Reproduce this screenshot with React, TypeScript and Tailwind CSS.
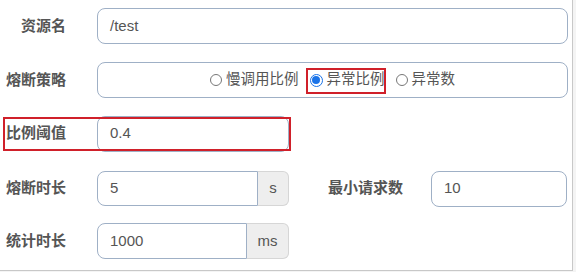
import React from "react";

const font = { fontFamily: '"Liberation Sans","Noto Sans CJK SC",Arial,sans-serif' };

function Label({ children }: { children: React.ReactNode }) {
  return (
    <div className="w-[66px] shrink-0 text-right text-[15px] font-bold text-[#555]">{children}</div>
  );
}

function Radio({ checked, label }: { checked?: boolean; label: string }) {
  return (
    <span className="flex items-center gap-[4px]">
      {checked ? (
        <span className="flex h-[13px] w-[13px] items-center justify-center rounded-full border border-[#1a73e8] bg-white">
          <span className="h-[8px] w-[8px] rounded-full bg-[#1a73e8]" />
        </span>
      ) : (
        <span className="h-[12px] w-[12px] rounded-full border border-[#777] bg-white" />
      )}
      <span>{label}</span>
    </span>
  );
}

const inputCls =
  "flex h-[36px] items-center rounded-[8px] border border-[#9fb0c6] bg-white pl-[12px] text-[15px] text-[#555]";

export default function App() {
  return (
    <div className="h-[272px] w-[576px] bg-[#f4f4f4]" style={font}>
      <div className="relative flex h-[271px] w-[573px] flex-col border-b border-r border-[#c8c8c8] bg-white pt-[8px]">
        {/* Row 1 */}
        <div className="flex h-[36px] items-center gap-[31px]">
          <Label>资源名</Label>
          <div className={inputCls + " w-[471px]"}>/test</div>
        </div>
        {/* Row 2 */}
        <div className="mt-[18px] flex h-[36px] items-center gap-[31px]">
          <Label>熔断策略</Label>
          <div className="relative flex h-[36px] w-[471px] items-center justify-center gap-[11px] rounded-[8px] border border-[#9fb0c6] bg-white text-[14.5px] text-[#555]">
            <Radio label="慢调用比例" />
            <Radio checked label="异常比例" />
            <Radio label="异常数" />
            <div className="pointer-events-none absolute left-[208px] top-[5px] h-[26px] w-[80px] border-2 border-[#d0202a]" />
          </div>
        </div>
        {/* Row 3 */}
        <div className="relative mt-[18px] flex h-[35px] items-center gap-[31px]">
          <Label>比例阈值</Label>
          <div className={inputCls + " h-[35px] w-[192px]"}>0.4</div>
          <div className="pointer-events-none absolute left-[3px] top-[1px] h-[34px] w-[288px] border-2 border-[#d0202a]" />
        </div>
        {/* Row 4 */}
        <div className="mt-[20px] flex h-[35px] items-center gap-[31px]">
          <Label>熔断时长</Label>
          <div className="flex h-[35px] w-[192px]">
            <div className="flex h-full w-[161px] items-center rounded-l-[8px] border border-[#9fb0c6] bg-white pl-[12px] text-[15px] text-[#555]">
              5
            </div>
            <div className="flex h-full flex-1 items-center justify-center rounded-r-[6px] border border-l-0 border-[#d6d6d6] bg-[#eeeeee] text-[15px] text-[#555]">
              s
            </div>
          </div>
          <div className="ml-[8px] text-[15px] font-bold text-[#555]">最小请求数</div>
          <div className={inputCls + " ml-[-3px] h-[36px] w-[136px]"}>10</div>
        </div>
        {/* Row 5 */}
        <div className="mt-[17px] flex h-[36px] items-center gap-[31px]">
          <Label>统计时长</Label>
          <div className="flex h-[36px] w-[192px]">
            <div className="flex h-full w-[150px] items-center rounded-l-[8px] border border-[#9fb0c6] bg-white pl-[12px] text-[15px] text-[#555]">
              1000
            </div>
            <div className="flex h-full flex-1 items-center justify-center rounded-r-[6px] border border-l-0 border-[#d6d6d6] bg-[#eeeeee] text-[15px] text-[#555]">
              ms
            </div>
          </div>
        </div>
      </div>
    </div>
  );
}
